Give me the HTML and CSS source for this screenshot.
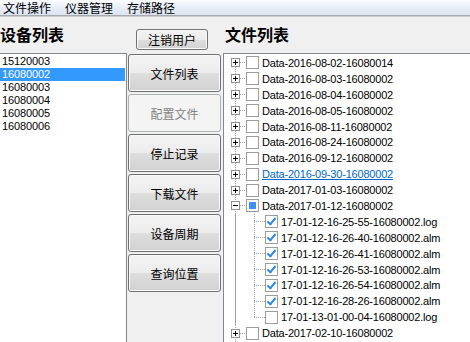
FILE: index.html
```html
<!DOCTYPE html>
<html lang="zh-CN">
<head>
<meta charset="utf-8">
<title>设备管理</title>
<link rel="stylesheet" href="styles.css">
</head>
<body>
<div class="menubar">
  <span class="menu-item">文件操作</span>
  <span class="menu-item">仪器管理</span>
  <span class="menu-item">存储路径</span>
</div>
<div class="header">
  <div class="h-left"><h2 class="title">设备列表</h2></div>
  <div class="h-mid"><button class="btn btn-small">注销用户</button></div>
  <div class="h-right"><h2 class="title">文件列表</h2></div>
</div>
<div class="main">
  <ul class="devlist">
    <li>15120003</li>
    <li class="sel">16080002</li>
    <li>16080003</li>
    <li>16080004</li>
    <li>16080005</li>
    <li>16080006</li>
  </ul>
  <div class="actions">
    <button class="btn">文件列表</button>
    <button class="btn" disabled>配置文件</button>
    <button class="btn">停止记录</button>
    <button class="btn">下载文件</button>
    <button class="btn">设备周期</button>
    <button class="btn">查询位置</button>
  </div>
  <div class="tree">
    <div class="items">
      <div class="row"><span class="exp plus"></span><span class="hl"></span><span class="cb"></span><span class="label">Data-2016-08-02-16080014</span></div>
      <div class="row"><span class="exp plus"></span><span class="hl"></span><span class="cb"></span><span class="label">Data-2016-08-03-16080002</span></div>
      <div class="row"><span class="exp plus"></span><span class="hl"></span><span class="cb"></span><span class="label">Data-2016-08-04-16080002</span></div>
      <div class="row"><span class="exp plus"></span><span class="hl"></span><span class="cb"></span><span class="label">Data-2016-08-05-16080002</span></div>
      <div class="row"><span class="exp plus"></span><span class="hl"></span><span class="cb"></span><span class="label">Data-2016-08-11-16080002</span></div>
      <div class="row"><span class="exp plus"></span><span class="hl"></span><span class="cb"></span><span class="label">Data-2016-08-24-16080002</span></div>
      <div class="row"><span class="exp plus"></span><span class="hl"></span><span class="cb"></span><span class="label">Data-2016-09-12-16080002</span></div>
      <div class="row"><span class="exp plus"></span><span class="hl"></span><span class="cb"></span><span class="label hot">Data-2016-09-30-16080002</span></div>
      <div class="row"><span class="exp plus"></span><span class="hl"></span><span class="cb"></span><span class="label">Data-2017-01-03-16080002</span></div>
      <div class="row"><span class="exp minus"></span><span class="hl"></span><span class="cb partial"></span><span class="label">Data-2017-01-12-16080002</span></div>
      <div class="children">
        <div class="row child"><span class="hl hl-long"></span><span class="cb checked"></span><span class="label">17-01-12-16-25-55-16080002.log</span></div>
        <div class="row child"><span class="hl hl-long"></span><span class="cb checked"></span><span class="label">17-01-12-16-26-40-16080002.alm</span></div>
        <div class="row child"><span class="hl hl-long"></span><span class="cb checked"></span><span class="label">17-01-12-16-26-41-16080002.alm</span></div>
        <div class="row child"><span class="hl hl-long"></span><span class="cb checked"></span><span class="label">17-01-12-16-26-53-16080002.alm</span></div>
        <div class="row child"><span class="hl hl-long"></span><span class="cb checked"></span><span class="label">17-01-12-16-26-54-16080002.alm</span></div>
        <div class="row child"><span class="hl hl-long"></span><span class="cb checked"></span><span class="label">17-01-12-16-28-26-16080002.alm</span></div>
        <div class="row child"><span class="hl hl-long"></span><span class="cb"></span><span class="label">17-01-13-01-00-04-16080002.log</span></div>
      </div>
      <div class="row"><span class="exp plus"></span><span class="hl"></span><span class="cb"></span><span class="label">Data-2017-02-10-16080002</span></div>
    </div>
  </div>
</div>
</body>
</html>
```

FILE: styles.css
```css
* { box-sizing: border-box; }
html, body {
  margin: 0;
  padding: 0;
}
body {
  width: 470px;
  height: 342px;
  overflow: hidden;
  background: #f0f0f0;
  font-family: "Noto Sans CJK SC", "Liberation Sans", sans-serif;
  color: #000;
}

/* menu bar */
.menubar {
  height: 16px;
  display: flex;
  gap: 14px;
  padding-left: 3px;
  align-items: flex-start;
  font-size: 12px;
  background: linear-gradient(to bottom, #fbfcfe 0%, #e8eef7 50%, #dce4f1 100%);
  border-bottom: 1px solid #a7abb0;
}
.menu-item {
  display: block;
  height: 15px;
  line-height: 15px;
}

/* header */
.header {
  height: 37px;
  display: flex;
  border-top: 1px solid #c9cbce;
}
.h-left { width: 127px; }
.h-mid { width: 98px; padding-left: 9px; padding-top: 12px; }
.h-right { flex: 1; }
.title {
  margin: 0;
  padding-top: 7px;
  font-size: 16px;
  line-height: 20px;
  font-weight: 700;
  letter-spacing: 0;
}

/* buttons */
.btn {
  display: block;
  width: 93px;
  height: 38px;
  margin: 0;
  padding: 0;
  font-family: "Noto Sans CJK SC", "Liberation Sans", sans-serif;
  font-size: 12px;
  color: #000;
  border: 1px solid #707070;
  border-radius: 3px;
  background: linear-gradient(to bottom, #f3f3f3 0%, #ececec 50%, #dedede 51%, #d2d2d2 100%);
  box-shadow: inset 0 0 0 1px #fafafa;
}
.btn-small {
  width: 72px;
  height: 21px;
  line-height: 17px;
}
.btn:disabled {
  color: #838383;
  border-color: #adb2b5;
  background: #f4f4f4;
  box-shadow: none;
}

/* main */
.main {
  display: flex;
  height: 290px;
}
.devlist {
  list-style: none;
  margin: 0;
  padding: 1px 1px 0 0;
  width: 127px;
  background: #fff;
  border-top: 1px solid #828790;
  border-right: 1px solid #828790;
  font-family: "Liberation Sans", sans-serif;
  font-size: 11px;
  letter-spacing: -0.1px;
}
.devlist li {
  height: 13px;
  line-height: 13px;
  padding-left: 2px;
}
.devlist li.sel {
  background: #3399ff;
  color: #fff;
}

.actions {
  width: 96px;
  padding: 1px 0 0 1px;
  display: flex;
  flex-direction: column;
  gap: 2px;
}

.tree {
  flex: 1;
  background: #fff;
  border-top: 1px solid #828790;
  border-left: 1px solid #828790;
  font-family: "Liberation Sans", sans-serif;
  font-size: 11px;
  letter-spacing: -0.2px;
  overflow: hidden;
}
.items {
  padding-top: 1px;
  padding-bottom: 20px;
  background-image: repeating-linear-gradient(to bottom, #a0a0a0 0 1px, transparent 1px 2px);
  background-size: 1px 100%;
  background-position: 11px 9px;
  background-repeat: no-repeat;
}
.row {
  height: 15.9px;
  display: flex;
  align-items: center;
  white-space: nowrap;
}
.exp {
  width: 9px;
  height: 9px;
  margin-left: 7px;
  border: 1px solid #919191;
  background: #fff;
  position: relative;
  flex: none;
}
.exp::before {
  content: "";
  position: absolute;
  left: 1px;
  top: 3px;
  width: 5px;
  height: 1px;
  background: #000;
}
.exp.plus::after {
  content: "";
  position: absolute;
  left: 3px;
  top: 1px;
  width: 1px;
  height: 5px;
  background: #000;
}
.hl {
  width: 6px;
  height: 1px;
  flex: none;
  background-image: repeating-linear-gradient(to right, #a0a0a0 0 1px, transparent 1px 2px);
}
.hl-long {
  width: 11px;
  margin-left: 30px;
}
.cb {
  width: 13px;
  height: 13px;
  flex: none;
  border: 1px solid #9c9c9c;
  background: #fff;
  position: relative;
}
.cb.partial::after {
  content: "";
  position: absolute;
  left: 2px;
  top: 2px;
  width: 7px;
  height: 7px;
  background: #3f8ef0;
}
.cb.checked::after {
  content: "";
  position: absolute;
  left: 3px;
  top: 0px;
  width: 3px;
  height: 7px;
  border-right: 2px solid #2f86e8;
  border-bottom: 2px solid #2f86e8;
  transform: rotate(40deg);
  transform-origin: center;
}
.label {
  margin-left: 3px;
  line-height: 14px;
}
.label.hot {
  color: #0066cc;
  text-decoration: underline;
}
.children {
  background-image: repeating-linear-gradient(to bottom, #a0a0a0 0 1px, transparent 1px 2px), repeating-linear-gradient(to bottom, #a0a0a0 0 1px, transparent 1px 2px);
  background-size: 1px 100%, 1px calc(100% - 8px);
  background-position: 11px 0, 30px 0;
  background-repeat: no-repeat;
}
```
